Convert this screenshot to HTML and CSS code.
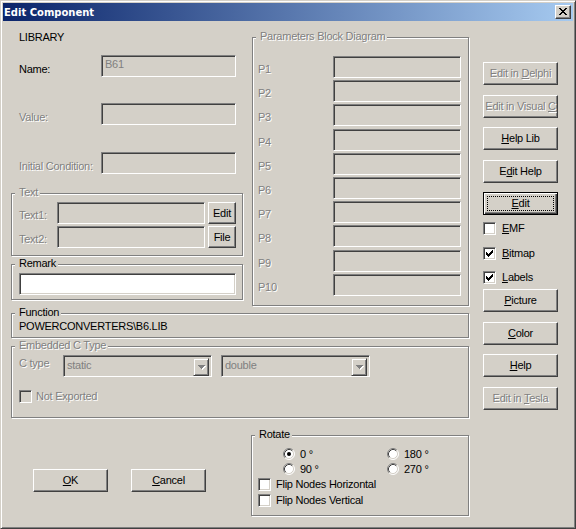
FILE: index.html
```html
<!DOCTYPE html>
<html>
<head>
<meta charset="utf-8">
<title>Edit Component</title>
<link rel="stylesheet" href="styles.css">
</head>
<body>
<div class="window">
  <div class="titlebar">
    <span class="title">Edit Component</span>
    <div class="capbtn">
      <svg class="glyph" width="8" height="7" viewBox="0 0 8 7"><path fill="#000" d="M0 0h2v1h-2z M6 0h2v1h-2z M1 1h2v1h-2z M5 1h2v1h-2z M2 2h4v1h-4z M3 3h2v1h-2z M2 4h4v1h-4z M1 5h2v1h-2z M5 5h2v1h-2z M0 6h2v1h-2z M6 6h2v1h-2z"/></svg>
    </div>
  </div>
  <div class="content">
    <div class="main">
      <div class="toprow">
        <div class="leftpanel">
          <div class="lib">LIBRARY</div>
          <div class="frow r-name"><span class="flabel">Name:</span><div class="input w135"><span class="gray">B61</span></div></div>
          <div class="frow r-value"><span class="flabel dis">Value:</span><div class="input w135"></div></div>
          <div class="frow r-ic"><span class="flabel dis">Initial Condition:</span><div class="input w135"></div></div>
          <div class="group g-text">
            <span class="legend dis">Text</span>
            <div class="trow"><span class="tlabel dis">Text1:</span><div class="input t-in"></div><div class="btn small">Edit</div></div>
            <div class="trow"><span class="tlabel dis">Text2:</span><div class="input t-in"></div><div class="btn small">File</div></div>
          </div>
          <div class="group g-remark">
            <span class="legend">Remark</span>
            <div class="input white r-in"></div>
          </div>
        </div>
        <div class="group g-params">
          <span class="legend dis">Parameters Block Diagram</span>
          <div class="prow"><span class="plabel dis">P1</span><div class="input p-in"></div></div>
          <div class="prow"><span class="plabel dis">P2</span><div class="input p-in"></div></div>
          <div class="prow"><span class="plabel dis">P3</span><div class="input p-in"></div></div>
          <div class="prow"><span class="plabel dis">P4</span><div class="input p-in"></div></div>
          <div class="prow"><span class="plabel dis">P5</span><div class="input p-in"></div></div>
          <div class="prow"><span class="plabel dis">P6</span><div class="input p-in"></div></div>
          <div class="prow"><span class="plabel dis">P7</span><div class="input p-in"></div></div>
          <div class="prow"><span class="plabel dis">P8</span><div class="input p-in"></div></div>
          <div class="prow"><span class="plabel dis">P9</span><div class="input p-in"></div></div>
          <div class="prow"><span class="plabel dis">P10</span><div class="input p-in"></div></div>
        </div>
      </div>

      <div class="group g-func">
        <span class="legend">Function</span>
        <div class="functext">POWERCONVERTERS\B6.LIB</div>
      </div>

      <div class="group g-emb">
        <span class="legend dis">Embedded C Type</span>
        <div class="erow">
          <span class="elabel dis">C type</span>
          <div class="input combo c1"><span class="ctext gray">static</span><div class="ddbtn"><svg width="8" height="5" viewBox="0 0 8 5"><path fill="#fff" d="M1 1h7v1h-7z M2 2h5v1h-5z M3 3h3v1h-3z M4 4h1v1h-1z"/><path fill="#808080" d="M0 0h7v1h-7z M1 1h5v1h-5z M2 2h3v1h-3z M3 3h1v1h-1z"/></svg></div></div>
          <div class="input combo"><span class="ctext gray">double</span><div class="ddbtn"><svg width="8" height="5" viewBox="0 0 8 5"><path fill="#fff" d="M1 1h7v1h-7z M2 2h5v1h-5z M3 3h3v1h-3z M4 4h1v1h-1z"/><path fill="#808080" d="M0 0h7v1h-7z M1 1h5v1h-5z M2 2h3v1h-3z M3 3h1v1h-1z"/></svg></div></div>
        </div>
        <div class="cbrow ne"><span class="cb off"></span><span class="dis">Not Exported</span></div>
      </div>

      <div class="bottomrow">
        <div class="okcancel">
          <div class="btn"><span><u>O</u>K</span></div>
          <div class="btn"><span><u>C</u>ancel</span></div>
        </div>
        <div class="group g-rot">
          <span class="legend">Rotate</span>
          <div class="rgrid">
            <div class="ritem">
              <svg class="radio" width="12" height="12" viewBox="0 0 12 12"><circle cx="6" cy="6" r="5" fill="#fff"/><path d="M2.11 9.89A5.5 5.5 0 0 1 9.89 2.11" stroke="#808080" fill="none"/><path d="M9.89 2.11A5.5 5.5 0 0 1 2.11 9.89" stroke="#fff" fill="none"/><path d="M2.82 9.18A4.5 4.5 0 0 1 9.18 2.82" stroke="#404040" fill="none"/><path d="M9.18 2.82A4.5 4.5 0 0 1 2.82 9.18" stroke="#D4D0C8" fill="none"/><circle cx="6" cy="6" r="2" fill="#000"/></svg>
              <span>0 °</span>
            </div>
            <div class="ritem">
              <svg class="radio" width="12" height="12" viewBox="0 0 12 12"><circle cx="6" cy="6" r="5" fill="#fff"/><path d="M2.11 9.89A5.5 5.5 0 0 1 9.89 2.11" stroke="#808080" fill="none"/><path d="M9.89 2.11A5.5 5.5 0 0 1 2.11 9.89" stroke="#fff" fill="none"/><path d="M2.82 9.18A4.5 4.5 0 0 1 9.18 2.82" stroke="#404040" fill="none"/><path d="M9.18 2.82A4.5 4.5 0 0 1 2.82 9.18" stroke="#D4D0C8" fill="none"/></svg>
              <span>180 °</span>
            </div>
            <div class="ritem">
              <svg class="radio" width="12" height="12" viewBox="0 0 12 12"><circle cx="6" cy="6" r="5" fill="#fff"/><path d="M2.11 9.89A5.5 5.5 0 0 1 9.89 2.11" stroke="#808080" fill="none"/><path d="M9.89 2.11A5.5 5.5 0 0 1 2.11 9.89" stroke="#fff" fill="none"/><path d="M2.82 9.18A4.5 4.5 0 0 1 9.18 2.82" stroke="#404040" fill="none"/><path d="M9.18 2.82A4.5 4.5 0 0 1 2.82 9.18" stroke="#D4D0C8" fill="none"/></svg>
              <span>90 °</span>
            </div>
            <div class="ritem">
              <svg class="radio" width="12" height="12" viewBox="0 0 12 12"><circle cx="6" cy="6" r="5" fill="#fff"/><path d="M2.11 9.89A5.5 5.5 0 0 1 9.89 2.11" stroke="#808080" fill="none"/><path d="M9.89 2.11A5.5 5.5 0 0 1 2.11 9.89" stroke="#fff" fill="none"/><path d="M2.82 9.18A4.5 4.5 0 0 1 9.18 2.82" stroke="#404040" fill="none"/><path d="M9.18 2.82A4.5 4.5 0 0 1 2.82 9.18" stroke="#D4D0C8" fill="none"/></svg>
              <span>270 °</span>
            </div>
          </div>
          <div class="cbrow fh"><span class="cb"></span><span>Flip Nodes Horizontal</span></div>
          <div class="cbrow fv"><span class="cb"></span><span>Flip Nodes Vertical</span></div>
        </div>
      </div>
    </div>

    <div class="side">
      <div class="sgroup">
        <div class="btn"><span class="dis">Edit in <u>D</u>elphi</span></div>
        <div class="btn"><span class="dis">Edit in Visual <u>C</u></span></div>
        <div class="btn"><span><u>H</u>elp Lib</span></div>
        <div class="btn"><span>E<u>d</u>it Help</span></div>
        <div class="btn default"><span><u>E</u>dit</span></div>
      </div>
      <div class="schecks">
        <div class="cbrow side-cb"><span class="cb"></span><span><u>E</u>MF</span></div>
        <div class="cbrow side-cb"><span class="cb"><svg class="check" width="7" height="7" viewBox="0 0 7 7"><path fill="#000" d="M0 2h1v3h-1z M1 3h1v3h-1z M2 4h1v3h-1z M3 3h1v3h-1z M4 2h1v3h-1z M5 1h1v3h-1z M6 0h1v3h-1z"/></svg></span><span><u>B</u>itmap</span></div>
        <div class="cbrow side-cb"><span class="cb"><svg class="check" width="7" height="7" viewBox="0 0 7 7"><path fill="#000" d="M0 2h1v3h-1z M1 3h1v3h-1z M2 4h1v3h-1z M3 3h1v3h-1z M4 2h1v3h-1z M5 1h1v3h-1z M6 0h1v3h-1z"/></svg></span><span><u>L</u>abels</span></div>
      </div>
      <div class="sgroup sg2">
        <div class="btn"><span><u>P</u>icture</span></div>
        <div class="btn"><span><u>C</u>olor</span></div>
        <div class="btn"><span><u>H</u>elp</span></div>
        <div class="btn"><span class="dis">Edit in <u>T</u>esla</span></div>
      </div>
    </div>
  </div>
</div>
</body>
</html>
```

FILE: styles.css
```css
* { box-sizing: border-box; }
html, body { margin: 0; padding: 0; }
body {
  background: #D4D0C8;
  font-family: "Liberation Sans", Arial, sans-serif;
  font-size: 11px;
  line-height: 13px;
  letter-spacing: -0.25px;
  color: #000;
}
svg { display: block; }

.window {
  width: 576px;
  height: 529px;
  background: #D4D0C8;
  border: 1px solid;
  border-color: #D4D0C8 #404040 #404040 #D4D0C8;
  box-shadow: inset 1px 1px #fff, inset -1px -1px #808080;
  padding: 2px;
}

.titlebar {
  height: 18px;
  background: linear-gradient(to right, #0A246A, #A6CAF0);
  display: flex;
  align-items: center;
  justify-content: space-between;
  padding: 0 2px 0 1px;
}
.title {
  color: #fff;
  font-family: "DejaVu Sans", sans-serif;
  font-weight: bold;
  font-size: 10px;
  letter-spacing: 0;
  line-height: 13px;
}
.capbtn {
  width: 16px;
  height: 14px;
  background: #D4D0C8;
  border: 1px solid;
  border-color: #fff #404040 #404040 #fff;
  box-shadow: inset -1px -1px #808080;
  padding: 2px 0 0 3px;
}

.content {
  display: flex;
  padding: 10px 0 0 8px;
}
.main {
  width: 458px;
  display: flex;
  flex-direction: column;
}

.dis { color: #808080; text-shadow: 1px 1px 0 #fff; }
.gray { color: #808080; }

/* sunken edit box */
.input {
  height: 22px;
  background: #D4D0C8;
  border: 1px solid;
  border-color: #808080 #fff #fff #808080;
  box-shadow: inset 1px 1px #404040, inset -1px -1px #D4D0C8;
  padding: 2px 3px;
  white-space: nowrap;
  overflow: hidden;
  flex: none;
}
.input.white { background: #fff; }

/* raised button */
.btn {
  width: 75px;
  height: 23px;
  background: #D4D0C8;
  border: 1px solid;
  border-color: #fff #404040 #404040 #fff;
  box-shadow: inset -1px -1px #808080;
  display: flex;
  align-items: center;
  justify-content: center;
  white-space: nowrap;
  overflow: hidden;
  flex: none;
  position: relative;
}
.btn.default {
  border-color: #000;
  box-shadow: inset 1px 1px #fff, inset -1px -1px #404040, inset -2px -2px #808080;
}
.btn.default::after {
  content: "";
  position: absolute;
  left: 3px; top: 3px; right: 3px; bottom: 3px;
  border: 1px dotted #000;
}

/* group box */
.group {
  position: relative;
  border: 1px solid #808080;
  box-shadow: inset 1px 1px #fff, 1px 1px #fff;
}
.legend {
  position: absolute;
  top: -8px;
  left: 3px;
  padding: 0 2px 0 4px;
  background: #D4D0C8;
  line-height: 13px;
  white-space: nowrap;
}

/* checkbox */
.cb {
  width: 13px;
  height: 13px;
  flex: none;
  background: #fff;
  border: 1px solid;
  border-color: #808080 #fff #fff #808080;
  box-shadow: inset 1px 1px #404040, inset -1px -1px #D4D0C8;
  padding: 2px 0 0 2px;
}
.cb.off { background: #D4D0C8; }
.cbrow {
  display: flex;
  align-items: center;
  height: 13px;
  gap: 5px;
  white-space: nowrap;
}

/* top row */
.toprow {
  display: flex;
  align-items: flex-start;
  gap: 9px;
}
.leftpanel {
  width: 232px;
  display: flex;
  flex-direction: column;
}
.lib { padding-left: 8px; height: 13px; }
.frow {
  display: flex;
  height: 22px;
  padding-left: 8px;
}
.r-name { margin-top: 11px; }
.r-value { margin-top: 26px; }
.r-ic { margin-top: 27px; }
.flabel { width: 82px; padding-top: 8px; white-space: nowrap; }
.w135 { width: 135px; }

.g-text {
  margin-top: 19px;
  padding: 8px 6px 7px 7px;
  display: flex;
  flex-direction: column;
  gap: 2px;
}
.trow { display: flex; height: 22px; }
.tlabel { width: 38px; padding-top: 7px; }
.t-in { width: 148px; margin-right: 3px; }
.btn.small { width: 28px; height: 22px; }

.g-remark {
  margin-top: 8px;
  padding: 8px 6px 4px 7px;
}
.r-in { width: 217px; }

.g-params {
  width: 217px;
  margin-top: 6px;
  padding: 18px 6px 9px 5px;
  display: flex;
  flex-direction: column;
  gap: 2.2px;
}
.prow { display: flex; height: 22px; }
.plabel { width: 75px; padding-top: 7px; }
.p-in { width: 128px; }

/* function */
.g-func {
  margin-top: 7px;
  padding: 6px 7px 4px 7px;
}
.functext { height: 13px; white-space: nowrap; }

/* embedded */
.g-emb {
  margin-top: 8px;
  padding: 8px 7px 14px 7px;
}
.erow { display: flex; height: 22px; }
.elabel { width: 44px; padding-top: 2px; }
.combo {
  width: 149px;
  display: flex;
  justify-content: space-between;
  padding: 2px 2px 2px 3px;
}
.combo.c1 { margin-right: 9px; }
.ctext { padding-top: 1px; }
.ddbtn {
  width: 16px;
  height: 18px;
  flex: none;
  background: #D4D0C8;
  border: 1px solid;
  border-color: #D4D0C8 #404040 #404040 #D4D0C8;
  box-shadow: inset 1px 1px #fff, inset -1px -1px #808080;
  display: flex;
  align-items: center;
  justify-content: center;
  padding: 1px 0 0 1px;
}
.cbrow.ne { margin-top: 13px; gap: 4px; }

/* bottom */
.bottomrow {
  display: flex;
  margin-top: 17px;
}
.okcancel {
  width: 240px;
  display: flex;
  align-items: flex-start;
  gap: 23px;
  padding: 34px 0 0 22px;
}
.g-rot {
  width: 218px;
  padding: 12px 6px 8px 6px;
}
.rgrid {
  display: grid;
  grid-template-columns: 104px auto;
  grid-auto-rows: 13px;
  row-gap: 2px;
  padding-left: 25px;
}
.ritem {
  display: flex;
  align-items: center;
  gap: 5px;
  white-space: nowrap;
}
.cbrow.fh { margin-top: 2px; }
.cbrow.fv { margin-top: 3px; }

/* side column */
.side {
  width: 75px;
  margin-left: 14px;
  margin-top: 31px;
  display: flex;
  flex-direction: column;
}
.sgroup {
  display: flex;
  flex-direction: column;
  gap: 9.5px;
}
.schecks {
  margin-top: 7px;
  display: flex;
  flex-direction: column;
  gap: 11.5px;
}
.side-cb { gap: 6px; }
.sg2 { margin-top: 5px; }
```
